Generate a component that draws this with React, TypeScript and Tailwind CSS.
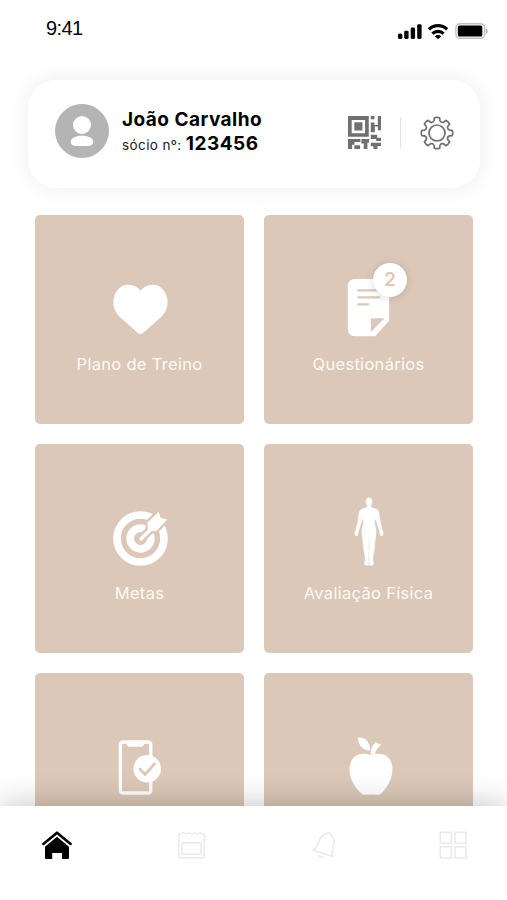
import type { ReactNode } from "react"

function SignalIcon() {
  return (
    <svg width="24" height="16" viewBox="0 0 24 16">
      <rect x="0" y="9.5" width="4.4" height="5.5" rx="1.6" />
      <rect x="6.2" y="6.7" width="4.4" height="8.3" rx="1.4" />
      <rect x="12.7" y="3.6" width="4.4" height="11.4" rx="1.4" />
      <rect x="19.2" y="0.2" width="4.4" height="14.8" rx="1.4" />
    </svg>
  )
}

function WifiIcon() {
  return (
    <svg width="20" height="16" viewBox="0 0 20 16" fill="none" stroke="black" strokeWidth="3.2">
      <path d="M0.9 5.4a13 13 0 0 1 18.2 0" />
      <path d="M4.4 9.6a8 8 0 0 1 11.2 0" />
      <path d="M10 15.3l-3.3-3.1a4.8 4.8 0 0 1 6.600 0z" fill="black" stroke="none" />
    </svg>
  )
}

function BatteryIcon() {
  return (
    <svg width="33" height="17" viewBox="0 0 33 17">
      <rect x="0.9" y="0.7" width="28.8" height="14.600" rx="4.2" fill="none" stroke="#c0c0c0" strokeWidth="1.4" />
      <rect x="2.8" y="2.6" width="24.500" height="10.800" rx="1.5" />
      <path d="M31 5.600c2 .8 2 4.400 0 5.200z" fill="#aaa" />
    </svg>
  )
}

function StatusBar() {
  return (
    <div className="flex h-20 shrink-0 items-start justify-between pl-[46px] pr-[19px]">
      <span className="mt-4 font-['Liberation_Sans',sans-serif] text-[20px] leading-6 tracking-[-0.6px]">9:41</span>
      <div className="mt-[23px] flex items-center">
        <SignalIcon />
        <div className="ml-1.5">
          <WifiIcon />
        </div>
        <div className="ml-[7px]">
          <BatteryIcon />
        </div>
      </div>
    </div>
  )
}

function Avatar() {
  return (
    <svg width="54" height="54" viewBox="0 0 54 54">
      <circle cx="27" cy="27" r="27" fill="#b4b4b4" />
      <circle cx="27" cy="21" r="9" fill="white" />
      <path d="M15.8 38c0-4 5-6.200 11.200-6.200S38.200 34 38.200 38c0 3-3 4-5.500 4H21.300c-2.500 0-5.500-1-5.500-4z" fill="white" />
    </svg>
  )
}

function QrIcon() {
  return (
    <svg width="33.500" height="33" viewBox="0 0 100 100" preserveAspectRatio="none" fill="#707070">
      <path fillRule="evenodd" d="M0 0h62v63H0zM11 12v40h40V12z" />
      <rect x="19" y="19" width="24" height="25" />
      <path d="M68 0h11v10H68z" />
      <path d="M89 0h11v43H89V32H80v17H68V20h11v7h10z" />
      <path d="M0 70h37v9H19v8h-7v13H0z" />
      <path d="M19 89h17v11H19zM40 70h23v11h-5v19H47V83h-7z" />
      <path d="M68 57h19v9h13v10H84v-6H68zM68 81h32v10H88v9H76v-8h-8z" />
    </svg>
  )
}

// one tooth every 45 degrees, with a rounded valley between teeth
function gearPath() {
  const at = (deg: number, r: number) => {
    const a = (deg * Math.PI) / 180
    return `${(17 + r * Math.cos(a)).toFixed(2)} ${(17 + r * Math.sin(a)).toFixed(2)}`
  }
  let d = ""
  for (let i = 0; i < 8; i++) {
    const c = i * 45
    d += `${i === 0 ? "M" : "L"}${at(c - 13, 12.8)}L${at(c - 10, 15.4)}Q${at(c, 16.2)} ${at(c + 10, 15.4)}L${at(c + 13, 12.8)}Q${at(c + 22.5, 10.6)} ${at(c + 32, 12.8)}`
  }
  return d + "Z"
}

function GearIcon() {
  return (
    <svg width="34" height="34" viewBox="0 0 34 34" fill="none" stroke="#707070" strokeWidth="1.700" strokeLinejoin="round">
      <path d={gearPath()} />
      <circle cx="17" cy="17" r="8" />
    </svg>
  )
}

function ProfileCard() {
  return (
    <div className="ml-7 mr-[27px] flex h-[108px] shrink-0 items-center rounded-[28px] bg-white pl-[27px] pr-[26px] shadow-[0_0_22px_rgba(0,0,0,0.08)]">
      <div className="-mt-1.5">
        <Avatar />
      </div>
      <div className="-mt-1 ml-[13px] flex-1 whitespace-nowrap">
        <p className="text-[19px] font-bold leading-6 tracking-[0.460px]">João Carvalho</p>
        <p className="text-[13.500px] leading-6 tracking-[0.400px] text-[#222]">
          sócio nº: <span className="text-[19px] font-bold tracking-[0.500px] text-black">123456</span>
        </p>
      </div>
      <div className="-mt-[3px] flex items-center">
        <QrIcon />
        <div className="mx-[19px] h-8 w-px bg-[#e4e4e4]" />
        <GearIcon />
      </div>
    </div>
  )
}

function HeartIcon() {
  return (
    <path
      fill="white"
      d="M40.500 64.300c-1 0-1.800-.5-2.600-1.200L20.300 47.500c-4.600-4.600-6.900-9-6.900-15.200 0-9.800 6.400-17.600 14.600-17.600 5.300 0 9.500 2.100 12.500 6 3-3.900 7.200-6 12.500-6 8.200 0 14.600 7.800 14.600 17.600 0 6.200-2.300 10.600-6.900 15.200L43.100 63.100c-.8.7-1.600 1.200-2.600 1.200z"
    />
  )
}

function DocumentIcon() {
  return (
    <>
      <path fill="white" d="M25.500 9h28a6.700 6.700 0 0 1 6.700 6.700v35L46 66.300H25.500a6.700 6.700 0 0 1-6.700-6.700V15.700A6.700 6.700 0 0 1 25.500 9z" />
      <path stroke="#dbc8b8" strokeWidth="2.200" strokeLinecap="round" d="M29.200 20.300h21M29.200 27.300h21M29.200 34.300h10" />
      <path fill="#dbc8b8" d="M41.800 62V48.300h14z" />
    </>
  )
}

function TargetIcon() {
  return (
    <>
      <circle cx="40.500" cy="39.500" r="23.500" fill="none" stroke="white" strokeWidth="7.700" />
      <circle cx="40.500" cy="39.500" r="10.300" fill="none" stroke="white" strokeWidth="7.700" />
      <g stroke="#dbc8b8" strokeWidth="4.500" strokeLinejoin="round" strokeLinecap="round">
        <path d="M41 40L53 28" strokeWidth="8.500" />
        <path d="M48 32l-.5-8.500L58.800 12.700l1.800 6.300 6.600 1.600L56.500 32z" />
      </g>
      <path stroke="white" strokeWidth="3.600" strokeLinecap="round" d="M41 40L53 28" />
      <path fill="white" d="M48 32l-.5-8.500L58.800 12.700l1.800 6.300 6.600 1.600L56.500 32z" />
    </>
  )
}

function BodyIcon() {
  return (
    <path
      fill="white"
      stroke="white"
      strokeWidth="0.500"
      d="M40-1.300c2 0 3.100 1.500 3 3.600 0 1.700-.8 3-1.200 3.800-.1 1.700.3 2.300 2 3 2.700.8 5.100 1.200 5.900 3.900.7 2.500.5 5 1 7.600.8 3.600 1.800 6.900 2.300 9.600.5 1.900 1.400 2.900 1.300 4.700l-1.300 2-1.300-.2c-.9-1.500-.9-3-1.200-4.900-1.200-3.200-2.500-6.400-3.200-9.800l-1.300-3c-.4 2.900-.7 4.900-.1 6.900 1.100 3.200 1.400 6.800 1 10.600-.3 3.400-1.100 5.700-1.200 9 0 4.500-1.200 8.400-1.700 11.600-.3 3.200-.1 5 .7 8l-1.500 1.200h-2.600l-.2-3.200c.2-6-.3-10 0-15.400L40.200 36h-.4l-.2 11.700c.3 5.400-.2 9.400 0 15.400l-.2 3.200h-2.600l-1.500-1.200c.8-3 1-4.800.7-8-.5-3.200-1.700-7.100-1.700-11.600-.1-3.300-.9-5.600-1.200-9-.4-3.800-.1-7.400 1-10.600.6-2 .3-4-.1-6.900l-1.300 3c-.7 3.400-2 6.600-3.200 9.800-.3 1.900-.3 3.400-1.200 4.900l-1.300.2-1.300-2c-.1-1.800.8-2.800 1.300-4.700.5-2.700 1.500-6 2.300-9.600.5-2.600.3-5.100 1-7.600.8-2.700 3.200-3.100 5.900-3.900 1.700-.7 2.100-1.300 2-3-.4-.8-1.200-2.100-1.200-3.800-.1-2.100 1-3.600 3-3.600z"
    />
  )
}

function PhoneCheckIcon() {
  return (
    <>
      <rect x="20.400" y="14" width="30.400" height="51" rx="2.500" fill="none" stroke="white" strokeWidth="3.300" />
      <path fill="white" d="M26 15h19c-1 1-1.200 3.800-3.500 3.800h-12C27.200 18.800 27 16 26 15z" />
      <circle cx="47.200" cy="40.700" r="13.800" fill="white" />
      <path fill="none" stroke="#dbc8b8" strokeWidth="2.700" strokeLinecap="round" strokeLinejoin="round" d="M40 41l5 5.500 9.500-10.700" />
    </>
  )
}

function AppleIcon() {
  return (
    <g fill="white">
      <path d="M28.700 9.700c7.200-.8 12.300 4 12.500 12.600-7.700.1-11.300-4.800-12.500-12.600z" />
      <path d="M46.300 14.300l5.900 2.500c-3.300 2.500-5.500 5.500-6.500 9.600h-4.400c.5-4.800 2.200-8.800 5-12.100z" />
      <path d="M42 27.200c3.500-1.400 7-1.800 10.500-1.100 7.200 1.400 11 7.700 11 14.900 0 9.500-5.500 19.500-12 25-1.200.9-3.300 1-5 .7-2.700-.4-5.300-.4-8 0-1.900.3-4 .2-5.300-.7-7.200-5.500-12.700-15.500-12.700-25 0-7.200 4-13.500 11.300-14.900 3.500-.7 6.900-.2 10.200 1.100z" />
    </g>
  )
}

interface TileProps {
  label: string
  icon: ReactNode
  badge?: number
}

function Tile({ label, icon, badge }: TileProps) {
  return (
    <button className="relative flex h-[209px] flex-col items-center rounded-[5px] bg-[#dbc8b8] pt-[55px]">
      <svg width="80" height="80" viewBox="0 0 80 80" className="shrink-0 overflow-visible">
        {icon}
      </svg>
      {badge != null && (
        <span className="absolute left-[109px] top-12 flex size-[34px] items-center justify-center rounded-full bg-white text-[19px] font-semibold text-[#dbc8b8] shadow-[0_1px_8px_rgba(0,0,0,0.14)]">
          {badge}
        </span>
      )}
      <span className="mt-0.5 text-[16.500px] leading-6 tracking-[0.300px] text-[#fffaf4]">{label}</span>
    </button>
  )
}

const tiles: TileProps[] = [
  { label: "Plano de Treino", icon: <HeartIcon /> },
  { label: "Questionários", icon: <DocumentIcon />, badge: 2 },
  { label: "Metas", icon: <TargetIcon /> },
  { label: "Avaliação Física", icon: <BodyIcon /> },
  { label: "", icon: <PhoneCheckIcon /> },
  { label: "", icon: <AppleIcon /> },
]

function BottomNav() {
  return (
    <nav className="relative flex h-[94px] shrink-0 items-start justify-between bg-white pl-[42px] pr-[39px] pt-[25px] shadow-[0_0_30px_rgba(0,0,0,0.25)]">
      <svg width="30" height="29" viewBox="0 0 30 29">
        <path d="M1.400 12.900L15 1.700l13.600 11.200" fill="none" stroke="black" strokeWidth="2.600" strokeLinecap="round" strokeLinejoin="round" />
        <path d="M15 5.800l12 9.900v11.400q0 1-1 1h-6v-6H10.200v6H4q-1 0-1-1V15.700z" />
      </svg>
      <svg width="30" height="29" viewBox="0 0 30 29" fill="none" stroke="#e9e9e9" strokeWidth="1.500" strokeLinejoin="round" className="overflow-visible">
        <path d="M7.500 2.800H6.700a2 2 0 0 0-2 2v20a2 2 0 0 0 2 2h21.600a2 2 0 0 0 2-2v-20a2 2 0 0 0-2-2h-.8M10.500 2.800h3.300M16.500 2.800h2.500M22 2.800h3" />
        <path d="M9 .6v2.500M15 .6v2.500M20.500 .6v2.500M26.300 .6v2.500" />
        <rect x="8" y="11.800" width="19" height="11.500" />
      </svg>
      <svg width="30" height="29" viewBox="0 0 30 29" fill="none" stroke="#e9e9e9" strokeWidth="1.500" strokeLinejoin="round" className="overflow-visible">
        <path d="M7.300 19.200c5.600-3.400 4.200-8.200 7.600-12.700 2.200-2.700 5.300-4 8.500-5.200 1 2.700 4.200 4.600 4.700 8.200.8 5.600-3.300 9-1.800 16z" />
        <path d="M12 23.800c1 2.200 3.500 3 5.500 1.900" />
      </svg>
      <svg width="30" height="29" viewBox="0 0 30 29" fill="none" stroke="#e9e9e9" strokeWidth="1.500">
        <rect x="2.300" y="1.300" width="11" height="11" />
        <rect x="17" y="1.300" width="11" height="11" />
        <rect x="2.300" y="15.800" width="11" height="11" />
        <rect x="17" y="15.800" width="11" height="11" />
      </svg>
    </nav>
  )
}

export default function App() {
  return (
    <div className="flex h-[900px] w-[507px] flex-col overflow-hidden bg-white font-['Inter',sans-serif] text-black">
      <StatusBar />
      <ProfileCard />
      <main className="min-h-0 flex-1 pl-[35px] pr-[34px] pt-[27px]">
        <div className="grid grid-cols-2 gap-5">
          {tiles.map((tile, i) => (
            <Tile key={i} {...tile} />
          ))}
        </div>
      </main>
      <BottomNav />
    </div>
  )
}
